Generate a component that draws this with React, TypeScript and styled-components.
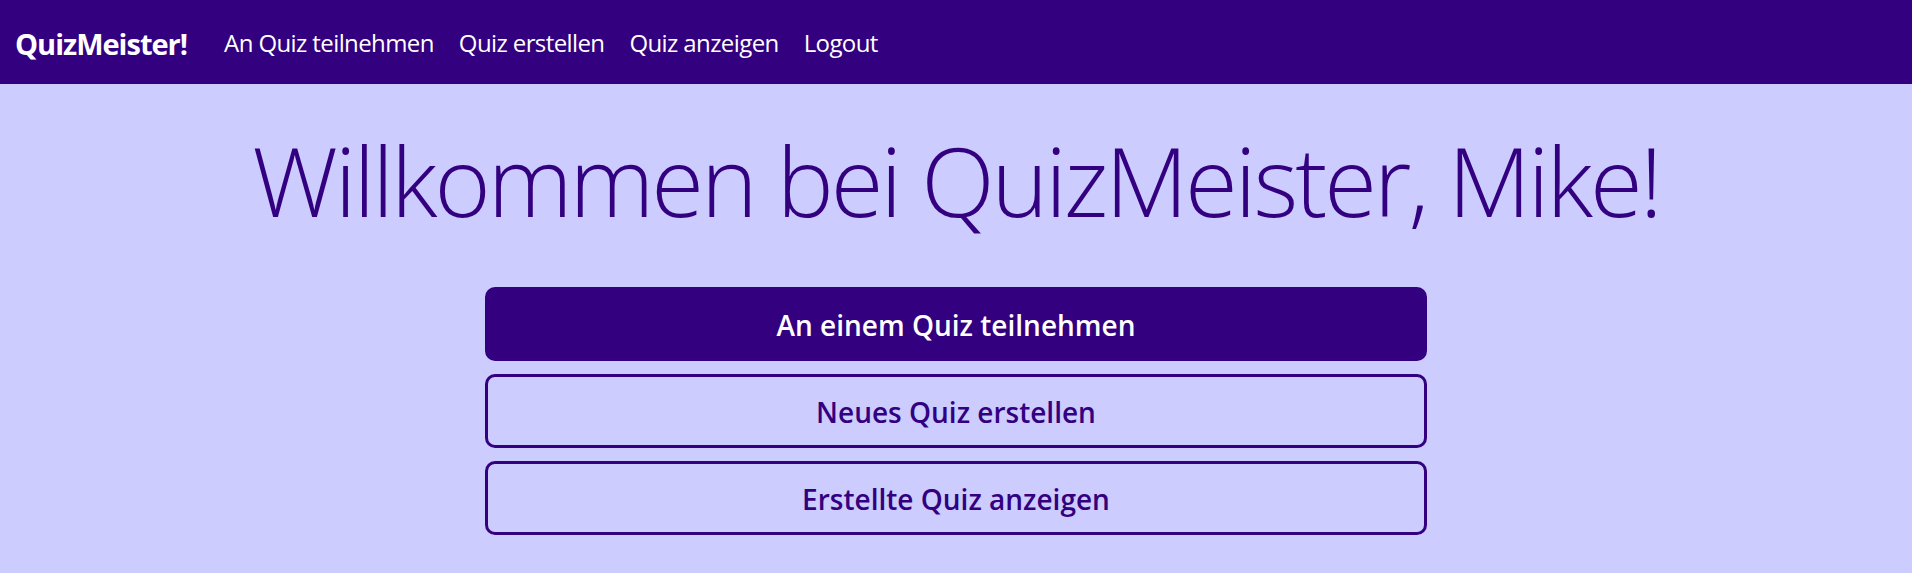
import React from "react";
import styled, { createGlobalStyle } from "styled-components";

const GlobalStyle = createGlobalStyle`
  html, body {
    margin: 0;
    padding: 0;
    background: #ccccff;
    font-family: "Open Sans", "Noto Sans", sans-serif;
  }
  * { box-sizing: border-box; }
`;

const purple = "#330080";

const Page = styled.div`
  min-height: 573px;
  background: #ccccff;
`;

const NavBar = styled.nav`
  height: 84px;
  background: ${purple};
  display: flex;
  align-items: center;
  padding: 2px 0 0 15px;
`;

const Brand = styled.a`
  color: #ffffff;
  font-size: 29px;
  font-weight: 700;
  letter-spacing: -1px;
  text-decoration: none;
  margin-right: 37px;
  line-height: 1;
`;

const NavLinks = styled.div`
  display: flex;
  align-items: center;
  gap: 25px;
`;

const NavLink = styled.a`
  color: #ffffff;
  font-size: 24px;
  font-weight: 400;
  letter-spacing: -0.6px;
  text-decoration: none;
  line-height: 1;
`;

const Main = styled.main`
  display: flex;
  flex-direction: column;
  align-items: center;
  padding-top: 38px;
`;

const Heading = styled.h1`
  margin: 0 0 50px;
  color: ${purple};
  font-size: 96px;
  font-weight: 300;
  line-height: 1.2;
  letter-spacing: -3px;
  text-align: center;
`;

const ButtonStack = styled.div`
  width: 942px;
  display: flex;
  flex-direction: column;
  gap: 13px;
`;

const ActionButton = styled.button<{ $primary?: boolean }>`
  height: 74px;
  width: 100%;
  border-radius: 10px;
  border: 3px solid ${purple};
  background: ${(p) => (p.$primary ? purple : "transparent")};
  color: ${(p) => (p.$primary ? "#ffffff" : purple)};
  font-family: "Open Sans", "Noto Sans", sans-serif;
  font-size: 28px;
  font-weight: 600;
  letter-spacing: 0;
  cursor: pointer;
  display: flex;
  align-items: center;
  justify-content: center;
  padding: 2px 0 0;
`;

export default function App() {
  return (
    <Page>
      <GlobalStyle />
      <NavBar>
        <Brand href="#">QuizMeister!</Brand>
        <NavLinks>
          <NavLink href="#">An Quiz teilnehmen</NavLink>
          <NavLink href="#">Quiz erstellen</NavLink>
          <NavLink href="#">Quiz anzeigen</NavLink>
          <NavLink href="#">Logout</NavLink>
        </NavLinks>
      </NavBar>
      <Main>
        <Heading>Willkommen bei QuizMeister, Mike!</Heading>
        <ButtonStack>
          <ActionButton $primary>An einem Quiz teilnehmen</ActionButton>
          <ActionButton>Neues Quiz erstellen</ActionButton>
          <ActionButton>Erstellte Quiz anzeigen</ActionButton>
        </ButtonStack>
      </Main>
    </Page>
  );
}
